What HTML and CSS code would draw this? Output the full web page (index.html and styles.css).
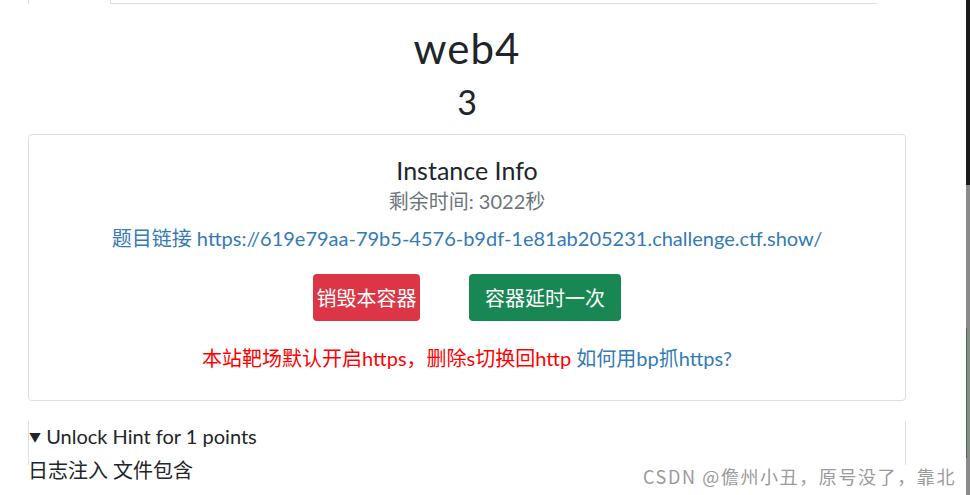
FILE: index.html
```html
<!DOCTYPE html>
<html lang="zh">
<head>
<meta charset="utf-8">
<link rel="stylesheet" href="styles.css">
</head>
<body>
<div class="page">
  <div class="topbar">
    <div class="top-left"></div>
    <div class="top-box"></div>
  </div>
  <h1 class="title">web4</h1>
  <h2 class="points">3</h2>
  <div class="card">
    <h3 class="card-title">Instance Info</h3>
    <div class="remain">剩余时间: 3022秒</div>
    <div class="link-line"><a class="link" href="#">题目链接 https://619e79aa-79b5-4576-b9df-1e81ab205231.challenge.ctf.show/</a></div>
    <div class="buttons">
      <button class="btn btn-red">销毁本容器</button>
      <button class="btn btn-green">容器延时一次</button>
    </div>
    <div class="notice"><span class="red">本站靶场默认开启https，删除s切换回http</span> <a class="link" href="#">如何用bp抓https?</a></div>
  </div>
  <div class="hint">
    <div class="hint-summary"><span class="tri">▼</span> Unlock Hint for 1 points</div>
  </div>
  <div class="hint-body">日志注入 文件包含</div>
</div>
<div class="watermark">CSDN @儋州小丑，原号没了，靠北</div>
<div class="scrollbar"><div class="thumb"></div><div class="track"><div class="green"></div></div></div>
</body>
</html>
```
FILE: styles.css
```css
html, body {
  margin: 0;
  padding: 0;
  background: #fff;
}
body {
  font-family: Lato, "Noto Sans CJK SC", sans-serif;
  color: #212529;
  width: 970px;
  height: 495px;
  overflow: hidden;
  position: relative;
}
.page {
  margin-left: 28px;
  width: 878px;
}
.topbar {
  display: flex;
  height: 4px;
}
.top-left {
  width: 81px;
  border-left: 1px solid #dcdcdc;
}
.top-box {
  width: 766px;
  border-left: 1px solid #dcdcdc;
  border-bottom: 1px solid #dcdcdc;
}
.title {
  margin: 20px 0 0;
  text-align: center;
  font-weight: 400;
  font-size: 42px;
  line-height: 48px;
  letter-spacing: 1px;
}
.points {
  margin: 10px 0 0;
  text-align: center;
  font-weight: 400;
  font-size: 34px;
  line-height: 40px;
}
.card {
  margin-top: 12px;
  height: 267px;
  border: 1px solid #dfdfdf;
  border-radius: 4px;
  box-sizing: border-box;
  text-align: center;
  padding-top: 20px;
}
.card-title {
  margin: 0;
  font-weight: 400;
  font-size: 25px;
  line-height: 30px;
}
.remain {
  margin-top: 3px;
  color: #6c757d;
  font-size: 20px;
  line-height: 26px;
}
.link-line {
  margin-top: 11px;
  font-size: 20px;
  line-height: 26px;
}
.link {
  color: #337ab7;
  text-decoration: none;
}
.buttons {
  margin-top: 23px;
  display: flex;
  justify-content: center;
  gap: 49px;
}
.btn {
  font-family: Lato, "Noto Sans CJK SC", sans-serif;
  font-size: 20px;
  color: #fff;
  border: none;
  border-radius: 4px;
  height: 47px;
  padding: 0;
  white-space: nowrap;
  cursor: pointer;
}
.btn-red {
  background: #dc3545;
  width: 107px;
}
.btn-green {
  background: #198754;
  width: 152px;
}
.notice {
  margin-top: 24px;
  font-size: 20px;
  line-height: 26px;
}
.red {
  color: #ff0000;
}
.hint {
  margin-top: 20px;
  height: 44px;
  border-left: 1px solid #e0e0e0;
  border-right: 1px solid #e0e0e0;
  box-sizing: border-box;
  padding-top: 2px;
}
.hint-summary {
  font-size: 20px;
  line-height: 26px;
}
.tri {
  font-size: 12px;
  vertical-align: 2px;
}
.hint-body {
  margin-top: -8px;
  font-size: 20px;
  line-height: 26px;
}
.watermark {
  position: absolute;
  right: 14px;
  top: 463px;
  font-family: "Noto Sans CJK SC", sans-serif;
  font-size: 18px;
  letter-spacing: 1.6px;
  color: #9a9a9a;
  text-shadow: 0 0 2px #fff;
}
.scrollbar {
  position: absolute;
  right: 0;
  top: 0;
  width: 4px;
  height: 495px;
  display: flex;
  flex-direction: column;
}
.thumb {
  height: 185px;
  background: #1a1a1a;
}
.track {
  flex: 1;
  background: #8a8a8a;
  position: relative;
}
.green {
  position: absolute;
  left: 0;
  top: 143px;
  width: 1px;
  height: 130px;
  background: #2d7a2d;
}
```
